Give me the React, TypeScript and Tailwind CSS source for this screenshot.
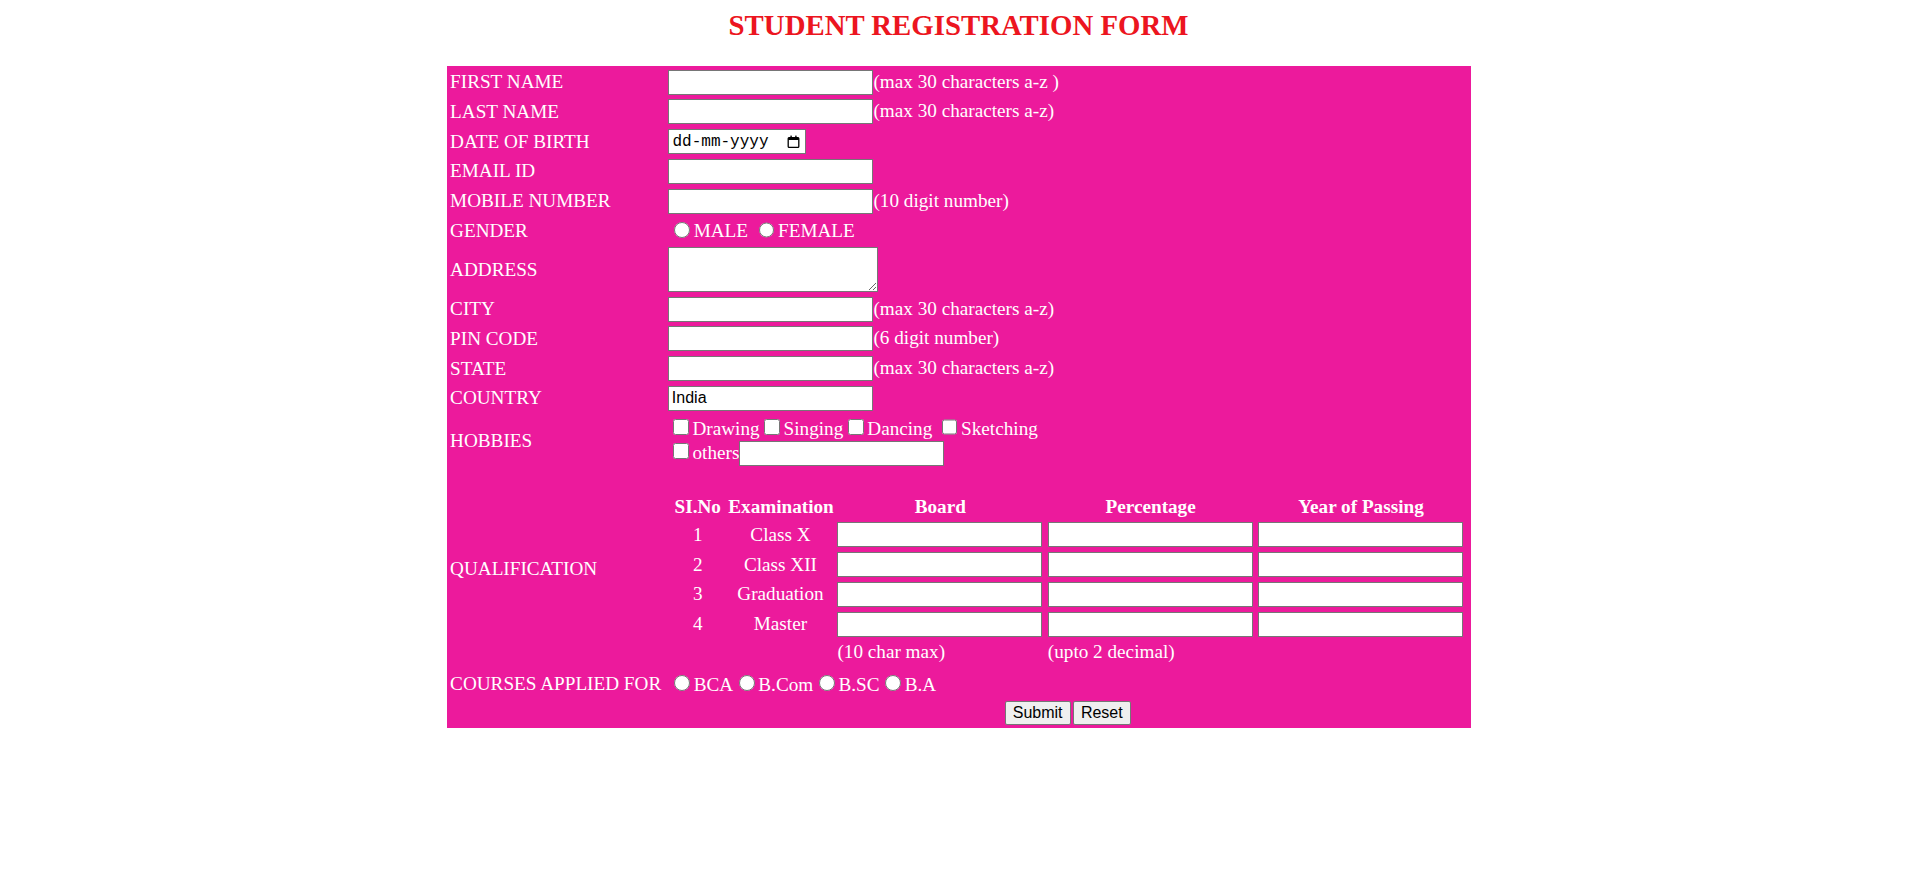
import React from 'react';

// form is drawn at the 120% zoom of the original page
const textInput =
  "inline-block h-[25px] w-[205px] border border-[#767676] bg-white px-[2.4px] align-baseline font-['Liberation_Sans',Arial,sans-serif] text-[16px] text-black outline-none";
const radio = 'inline-block h-[15.6px] w-[15.6px] ml-[6px] mr-[3.6px] mt-[3.6px] align-baseline';
const checkbox = 'inline-block h-[15.6px] w-[15.6px] ml-[4.8px] mr-[3.6px] my-[3.6px] align-baseline';

const Row: React.FC<{ label?: string; children?: React.ReactNode; right?: string }> = ({
  label,
  children,
  right = '',
}) => (
  <div className="flex gap-[2.4px]">
    <div className="flex w-[216px] shrink-0 items-center p-[1.2px]">{label}</div>
    <div className={`flex flex-1 items-center p-[1.2px] ${right}`}>{children}</div>
  </div>
);

const CalendarIcon = () => (
  <svg width="13" height="13" viewBox="0 0 13 13" className="inline-block">
    <rect x="1.2" y="2.6" width="10.6" height="9.8" rx="1" fill="none" stroke="#000" strokeWidth="1.3" />
    <rect x="1.2" y="2.6" width="10.6" height="2.4" fill="#000" />
    <rect x="3.4" y="0.6" width="1.4" height="2.4" fill="#000" />
    <rect x="8.2" y="0.6" width="1.4" height="2.4" fill="#000" />
  </svg>
);

const exams = ['Class X', 'Class XII', 'Graduation', 'Master'];

export default function App() {
  return (
    <div className="min-h-screen bg-white pl-[4px] font-['Liberation_Serif','Times_New_Roman',serif] leading-[normal]">
      <h2 className="pt-[9px] text-center text-[28.8px] font-bold leading-[33px] text-[#ec1520]">
        STUDENT REGISTRATION FORM
      </h2>

      <form
        onSubmit={(e) => e.preventDefault()}
        className="mx-auto mt-[24px] flex w-[1024px] flex-col gap-[2.4px] bg-[#ec1a9c] p-[2.4px] text-[19.2px] text-white"
      >
        <Row label="FIRST NAME">
          <div>
            <input type="text" className={textInput} />
            (max 30 characters a-z )
          </div>
        </Row>
        <Row label="LAST NAME">
          <div>
            <input type="text" className={textInput} />
            (max 30 characters a-z)
          </div>
        </Row>
        <Row label="DATE OF BIRTH">
          <div className="flex h-[25px] w-[138px] items-center justify-between border border-[#767676] bg-white pl-[3px] pr-[5px] font-['Liberation_Mono',monospace] text-[16px] text-black">
            <span>dd-mm-yyyy</span>
            <CalendarIcon />
          </div>
        </Row>
        <Row label="EMAIL ID">
          <div>
            <input type="text" className={textInput} />
          </div>
        </Row>
        <Row label="MOBILE NUMBER">
          <div>
            <input type="text" className={textInput} />
            (10 digit number)
          </div>
        </Row>
        <Row label="GENDER">
          <div>
            <input type="radio" name="gender" className={radio} />
            MALE{' '}
            <input type="radio" name="gender" className={radio} />
            FEMALE
          </div>
        </Row>
        <Row label="ADDRESS">
          <textarea className="block h-[44.4px] w-[210px] border border-[#767676] bg-white" />
        </Row>
        <Row label="CITY">
          <div>
            <input type="text" className={textInput} />
            (max 30 characters a-z)
          </div>
        </Row>
        <Row label="PIN CODE">
          <div>
            <input type="text" className={textInput} />
            (6 digit number)
          </div>
        </Row>
        <Row label="STATE">
          <div>
            <input type="text" className={textInput} />
            (max 30 characters a-z)
          </div>
        </Row>
        <Row label="COUNTRY">
          <div>
            <input type="text" defaultValue="India" className={textInput} />
          </div>
        </Row>
        <Row label="HOBBIES">
          <div>
            <div>
              <input type="checkbox" className={checkbox} />
              Drawing
              <input type="checkbox" className={checkbox} />
              Singing
              <input type="checkbox" className={checkbox} />
              Dancing{' '}
              <input type="checkbox" className={checkbox} />
              Sketching
            </div>
            <div>
              <input type="checkbox" className={checkbox} />
              others
              <input type="text" className={textInput} />
            </div>
          </div>
        </Row>
        <Row label="QUALIFICATION">
          <div className="grid grid-cols-[53.8px_106.8px_208px_208px_208px] gap-[2.4px] px-[2.4px] pb-[2.4px] pt-[23.2px]">
            <div className="p-[1.2px] text-center font-bold">SI.No</div>
            <div className="p-[1.2px] text-center font-bold">Examination</div>
            <div className="p-[1.2px] text-center font-bold">Board</div>
            <div className="p-[1.2px] text-center font-bold">Percentage</div>
            <div className="p-[1.2px] text-center font-bold">Year of Passing</div>
            {exams.map((exam, i) => (
              <React.Fragment key={exam}>
                <div className="flex items-center justify-center p-[1.2px]">{i + 1}</div>
                <div className="flex items-center justify-center p-[1.2px]">{exam}</div>
                <div className="p-[1.2px]">
                  <input type="text" className={`${textInput} block w-[205.6px]`} />
                </div>
                <div className="p-[1.2px]">
                  <input type="text" className={`${textInput} block w-[205.6px]`} />
                </div>
                <div className="p-[1.2px]">
                  <input type="text" className={`${textInput} block w-[205.6px]`} />
                </div>
              </React.Fragment>
            ))}
            <div className="p-[1.2px]" />
            <div className="p-[1.2px]" />
            <div className="p-[1.2px]">(10 char max)</div>
            <div className="p-[1.2px]">(upto 2 decimal)</div>
            <div className="p-[1.2px]" />
          </div>
        </Row>
        <Row label="COURSES APPLIED FOR">
          <div>
            <input type="radio" name="course" className={radio} />
            BCA
            <input type="radio" name="course" className={radio} />
            B.Com
            <input type="radio" name="course" className={radio} />
            B.SC
            <input type="radio" name="course" className={radio} />
            B.A
          </div>
        </Row>
        <Row right="justify-center">
          <div className="flex gap-[2px] font-['Liberation_Sans',Arial,sans-serif] text-[16px] text-black">
            <button type="submit" className="h-[24px] rounded-[2px] border border-[#767676] bg-[#efefef] px-[7.2px]">
              Submit
            </button>
            <button type="reset" className="h-[24px] rounded-[2px] border border-[#767676] bg-[#efefef] px-[7.2px]">
              Reset
            </button>
          </div>
        </Row>
      </form>
    </div>
  );
}
